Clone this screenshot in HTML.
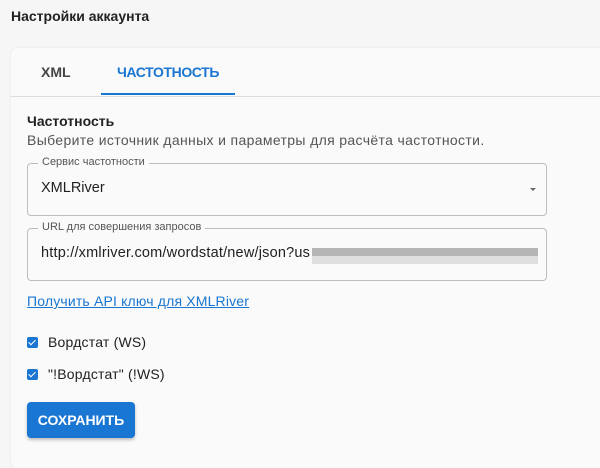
<!DOCTYPE html>
<html><head><meta charset="utf-8"><style>
*{box-sizing:border-box;margin:0;padding:0}
body{width:600px;height:455px;overflow:hidden;background:#f6f6f6;font-family:"Liberation Sans",Arial,sans-serif;color:#212121;position:relative}
.abs{position:absolute;white-space:nowrap}
.card{position:absolute;left:11px;top:48px;width:600px;height:420px;background:#fafafa;border-radius:6px;box-shadow:0 0 2px rgba(0,0,0,.08)}
.field{position:absolute;left:27px;width:520px;height:53px;border:1px solid #bdbdbd;border-radius:4px}
.lbl{position:absolute;top:-8px;left:10px;background:#fafafa;padding:0 4px;font-size:11px;color:#555}
.cb{position:absolute;left:27px;width:11px;height:11px;background:#1976d2;border-radius:2px}
.cb:after{content:"";position:absolute;left:3px;top:1px;width:3px;height:6px;border:solid #fff;border-width:0 1.5px 1.5px 0;transform:rotate(45deg)}
</style></head><body>
<div class="abs" style="left:11px;top:8px;font-size:14px;font-weight:bold;color:#222">Настройки аккаунта</div>
<div class="card"></div>
<div class="abs" style="left:41px;top:64px;font-size:14px;font-weight:bold;color:#444">XML</div>
<div class="abs" style="left:117px;top:64px;font-size:14px;font-weight:bold;color:#1976d2;letter-spacing:-0.4px">ЧАСТОТНОСТЬ</div>
<div class="abs" style="left:101px;top:93px;width:134px;height:2px;background:#1976d2"></div>
<div class="abs" style="left:11px;top:96px;width:589px;height:1px;background:#ddd"></div>
<div class="abs" style="left:27px;top:113px;font-size:14px;font-weight:bold;color:#222">Частотность</div>
<div class="abs" style="left:27px;top:132px;font-size:14px;color:#555;letter-spacing:0.35px">Выберите источник данных и параметры для расчёта частотности.</div>
<div class="field" style="top:163px"><span class="lbl">Сервис частотности</span>
<span class="abs" style="left:13px;top:16px;font-size:14.5px">XMLRiver</span>
<span class="abs" style="left:502px;top:24px;width:0;height:0;border-left:3px solid transparent;border-right:3px solid transparent;border-top:3px solid #666"></span></div>
<div class="field" style="top:228px"><span class="lbl">URL для совершения запросов</span>
<span class="abs" style="left:13px;top:16px;font-size:14.5px;letter-spacing:0.2px">http://xmlriver.com/wordstat/new/json?us</span>
<span class="abs" style="left:284px;top:19px;width:226px;height:16px;background:linear-gradient(#b5b5b5 0 50%,#dedede 50%)"></span></div>
<div class="abs" style="left:27px;top:293px;font-size:14px;color:#1976d2;text-decoration:underline;letter-spacing:0.17px">Получить API ключ для XMLRiver</div>
<div class="cb" style="top:337px"></div>
<div class="abs" style="left:48px;top:334px;font-size:14px;letter-spacing:0.2px">Вордстат (WS)</div>
<div class="cb" style="top:369px"></div>
<div class="abs" style="left:48px;top:366px;font-size:14px;letter-spacing:0.2px">"!Вордстат" (!WS)</div>
<div class="abs" style="left:27px;top:402px;width:108px;height:36px;background:#1976d2;border-radius:4px;box-shadow:0 2px 3px rgba(0,0,0,.25);color:#fff;font-size:14px;font-weight:bold;text-align:center;line-height:36px">СОХРАНИТЬ</div>
</body></html>
